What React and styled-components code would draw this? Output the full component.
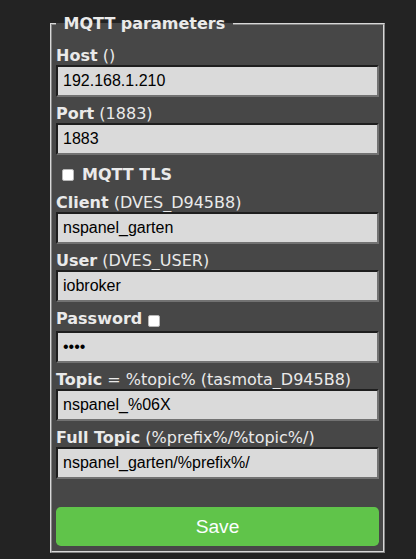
import React from 'react';
import styled, { createGlobalStyle } from 'styled-components';

const GlobalStyle = createGlobalStyle`
  html, body {
    margin: 0;
    padding: 0;
    background: #232323;
  }
  body {
    font-family: 'DejaVu Sans', Verdana, sans-serif;
    font-size: 16px;
    color: #eaeaea;
  }
`;

const Page = styled.div`
  min-height: 559px;
  padding: 14px 0 0 50px;
  box-sizing: border-box;
`;

const Fieldset = styled.fieldset`
  width: 335px;
  box-sizing: border-box;
  margin: 0;
  min-width: 0;
  padding: 0 4px 5px;
  background: #474747;
  border: 2px ridge #d8d8d8;
`;

const Legend = styled.legend`
  padding: 0 2px;
  line-height: 19px;
  font-weight: bold;
  color: #eaeaea;
`;

const Form = styled.div`
  display: flex;
  flex-direction: column;
  gap: 8px;
  padding-top: 14px;
`;

const Field = styled.div`
  display: flex;
  flex-direction: column;
`;

const Label = styled.div`
  display: flex;
  align-items: flex-start;
  height: ${p => p.$tall ? '21px' : '18px'};
  line-height: 18px;
  white-space: pre;
`;

const Strong = styled.b`
  font-weight: bold;
`;

const Input = styled.input`
  width: 100%;
  height: 32px;
  box-sizing: border-box;
  margin: 0;
  padding: 0 5px;
  font-family: 'Liberation Sans', Arial, sans-serif;
  font-size: 16px;
  color: #000;
  background: #dadada;
  border: 2px solid;
  border-color: #1e1e1e #727272 #727272 #1e1e1e;
  outline: none;
`;

const Check = styled.span`
  display: inline-block;
  width: 12px;
  height: 12px;
  box-sizing: border-box;
  background: #fff;
  border: 1px solid #b8b8b8;
  border-radius: 2px;
  margin: ${p => p.$inline ? '5px 0 0 6px' : '0 8px 0 0'};
`;

const CheckRow = styled.div`
  display: flex;
  align-items: center;
  height: 23px;
  padding-left: 6px;
  line-height: 18px;
  font-weight: bold;
`;

const SaveButton = styled.button`
  margin-top: 20px;
  width: 100%;
  height: 39px;
  border: 0;
  border-radius: 4.8px;
  background: #60c44a;
  color: #faffff;
  font-family: 'Liberation Sans', Arial, sans-serif;
  font-size: 19.2px;
  cursor: pointer;
`;

const TextField = ({ name, hint, value, type }) => (
  <Field>
    <Label>
      <Strong>{name}</Strong>
      {hint}
    </Label>
    <Input type={type || 'text'} value={value} readOnly />
  </Field>
);

export default function App() {
  return (
    <>
      <GlobalStyle />
      <Page>
        <Fieldset>
          <Legend>{'\u00a0MQTT parameters\u00a0'}</Legend>
          <Form>
            <TextField name="Host" hint=" ()" value="192.168.1.210" />
            <TextField name="Port" hint=" (1883)" value="1883" />
            <CheckRow>
              <Check />
              MQTT TLS
            </CheckRow>
            <TextField name="Client" hint=" (DVES_D945B8)" value="nspanel_garten" />
            <TextField name="User" hint=" (DVES_USER)" value="iobroker" />
            <Field>
              <Label $tall>
                <Strong>Password</Strong>
                <Check $inline />
              </Label>
              <Input type="password" value="****" readOnly />
            </Field>
            <TextField name="Topic" hint=" = %topic% (tasmota_D945B8)" value="nspanel_%06X" />
            <TextField name="Full Topic" hint=" (%prefix%/%topic%/)" value="nspanel_garten/%prefix%/" />
            <SaveButton>Save</SaveButton>
          </Form>
        </Fieldset>
      </Page>
    </>
  );
}
